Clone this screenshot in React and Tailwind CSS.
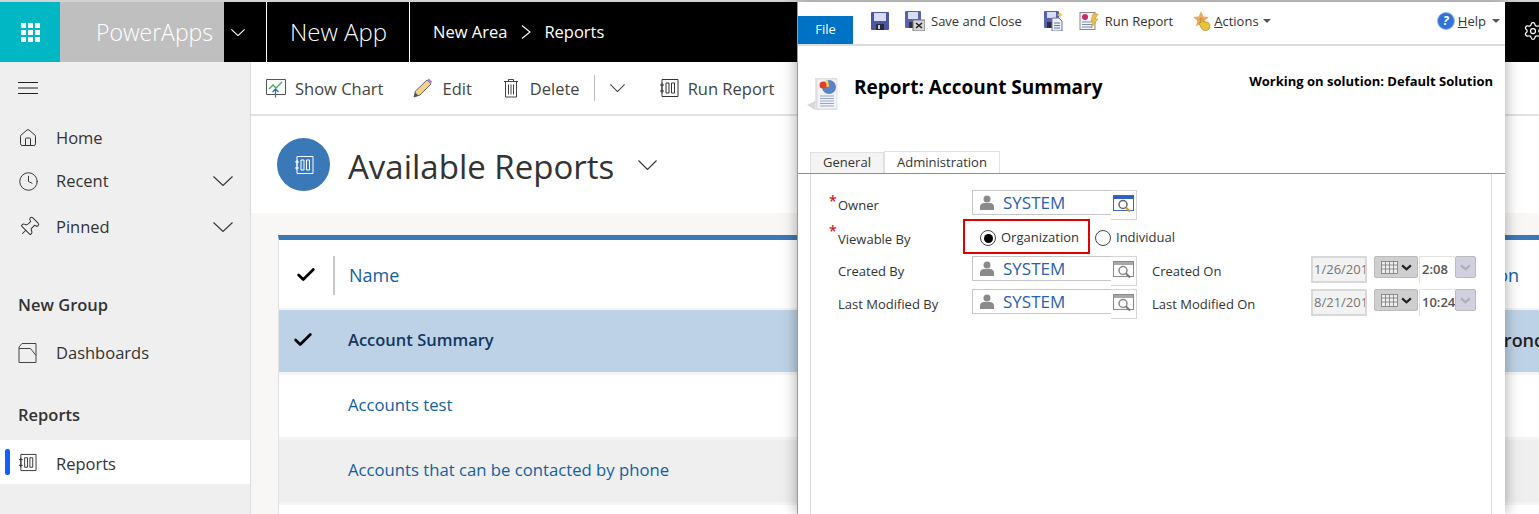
import React from "react";
import { Home, Clock, Pin, Settings, Check } from "lucide-react";

const Chev = ({ className = "", w = 20, h = 10, color = "#333" }) => (
  <svg viewBox="0 0 20 10" width={w} height={h} className={`shrink-0 ${className}`} fill="none" preserveAspectRatio="none">
    <path d="M.5.500L10 9.500 19.500.500" stroke={color} strokeWidth="1.100" vectorEffect="non-scaling-stroke" />
  </svg>
);

const ReportIcon = ({ className = "", color = "#333" }) => (
  <svg viewBox="0 0 20 20" className={className} fill="none" stroke={color} strokeWidth="1">
    <path d="M3 1.500h16v17H3z" />
    <path d="M7 5h3v10H7zM12.500 5h3v10h-3z" />
    <path d="M1 7h4M1 13h4M3 5v10" />
  </svg>
);

const ChartIcon = () => (
  <svg viewBox="0 0 20 20" className="w-5 h-5 shrink-0" fill="none">
    <path d="M.5 1.500h19v15H.5z" stroke="#555" />
    <path d="M3 11l4-4 3 3 6-6" stroke="#3fae5a" strokeWidth="1.300" />
    <path d="M9.500 19.500v-8M6.500 14l3-3 3 3" stroke="#2a6fb5" strokeWidth="1.300" />
  </svg>
);

const PencilIcon = () => (
  <svg viewBox="0 0 20 20" className="w-5 h-5 shrink-0">
    <path d="M1 19l1.500-6L14 2l4 4L7 17z" fill="#f1d488" stroke="#666" strokeWidth="1" />
    <path d="M14 2l2-1.500 3 3L18 6z" fill="#a98ad0" />
    <path d="M1 19l1.200-4.500 3.300 3z" fill="#555" />
  </svg>
);

const TrashIcon = () => (
  <svg viewBox="0 0 16 20" className="w-4 h-5 shrink-0" fill="none" stroke="#444">
    <path d="M1 3.500h14M5.500 3.500v-2h5v2M2.500 3.500v15.500h11V3.500M5.500 6.500v10M8 6.500v10M10.500 6.500v10" />
  </svg>
);

const DashIcon = () => (
  <svg viewBox="0 0 19 20" className="w-[19px] h-[20px] shrink-0" fill="none" stroke="#444">
    <path d="M1 19.500h17V.5H4L1 4zM1 5.500h11.500l5.500 7" />
  </svg>
);

const SaveIcon = ({ className = "" }) => (
  <svg viewBox="0 0 18 18" className={className}>
    <rect x="0" y="0" width="18" height="18" rx="1" fill="#4d55a8" />
    <rect x="3" y="1" width="12" height="8" fill="#d8dcf4" />
    <rect x="5" y="12" width="8" height="6" fill="#2b2b38" />
    <rect x="7" y="13" width="2" height="4" fill="#c5c8d8" />
  </svg>
);

const SaveClose = () => (
  <svg viewBox="0 0 20 20" className="w-5 h-5 shrink-0">
    <rect x="0" y="0" width="16" height="17" rx="1" fill="#5a62ad" />
    <rect x="3" y="1" width="10" height="7" fill="#d8dcf4" />
    <rect x="4" y="11" width="8" height="6" fill="#30303c" />
    <rect x="8" y="9" width="12" height="11" fill="#d5d5d5" stroke="#777" />
    <path d="M11 12l6 5M17 12l-6 5" stroke="#222" strokeWidth="1.500" />
  </svg>
);

const SaveNew = () => (
  <svg viewBox="0 0 19 20" className="w-[19px] h-5 shrink-0">
    <rect x="0" y="0" width="15" height="17" rx="1" fill="#5a62ad" />
    <rect x="3" y="1" width="9" height="6" fill="#d8dcf4" />
    <rect x="3" y="11" width="7" height="6" fill="#30303c" />
    <path d="M8 7h7l3 3v10H8z" fill="#eef1fb" stroke="#6a74a8" />
    <path d="M10 12h6M10 14.500h6M10 17h6" stroke="#5a72b0" />
    <path d="M16 1l1 2 2 1-2 1-1 2-1-2-2-1 2-1z" fill="#f4c64a" />
  </svg>
);

const RunIcon = () => (
  <svg viewBox="0 0 20 20" className="w-5 h-5 shrink-0">
    <rect x="1" y="1.500" width="15" height="17" fill="#f4f4f4" stroke="#888" />
    <circle cx="6" cy="6" r="3" fill="#c8286e" />
    <path d="M3 11h10M3 13.500h10M3 16h10" stroke="#7a8ab0" />
    <path d="M14 3h5l-3 5h3l-7 9 2-7h-2z" fill="#e8c24a" stroke="#b98f20" strokeWidth=".5" />
  </svg>
);

const ActionsIcon = () => (
  <svg viewBox="0 0 20 20" className="w-5 h-5 shrink-0">
    <path d="M8 0l2.300 5.500 5.700.500-4.300 3.800 1.300 5.700L8 12.500 3 15.500l1.300-5.700L0 6l5.700-.500z" fill="#f0a860" />
    <path d="M7 7.500c1-1 2 0 2 1l1 2 4 .500c2 .500 3 2 3 4 0 3-2 4.500-4 4.500-3 0-4-1-5-3l-2-4c0-1 1-1.500 2-.500z" fill="#e8c23c" stroke="#9c7d1c" strokeWidth=".6" />
  </svg>
);

const HelpIcon = () => (
  <div className="w-[18px] h-[18px] rounded-full bg-[#2f72d8] border border-[#9db9dc] flex items-center justify-center text-white text-[12px] font-bold italic leading-none shrink-0">?</div>
);

const ReportDoc = () => (
  <svg viewBox="0 0 32 38" className="w-8 h-[38px] shrink-0">
    <path d="M0 28l8-4v9z" fill="#d9d9d9" />
    <rect x="8" y="1" width="22" height="32" fill="#e6e6e6" />
    <rect x="10" y="2" width="20" height="30" fill="#f3f4fa" stroke="#c6c6c6" strokeWidth=".5" />
    <circle cx="22" cy="10" r="7" fill="#5d83c4" />
    <path d="M22 10l-7-1a7 7 0 0 1 6-6z" fill="#ffd24c" />
    <circle cx="16" cy="8" r="3.500" fill="#e8392c" />
    <path d="M13 19h14M13 21.500h14M13 24h14M13 26.500h14M13 29h14" stroke="#95a6c8" />
  </svg>
);

const PersonIcon = () => (
  <svg viewBox="0 0 14 16" className="w-[14px] h-4 shrink-0" fill="#8a8a8a">
    <circle cx="7" cy="4" r="3.500" />
    <path d="M0 15v-3.500c0-2 2-3.500 4-3.500h6c2 0 4 1.500 4 3.500V15z" />
  </svg>
);

const LookupIcon = ({ active }) => (
  <svg viewBox="0 0 21 18" className="w-[21px] h-[18px]" fill="none">
    <rect x=".5" y=".5" width="20" height="15" fill="#fff" stroke={active ? "#3c68b0" : "#8a8a8a"} />
    <rect x="1" y="1" width="19" height="3" fill={active ? "#2f62c0" : "#a8a8a8"} />
    <circle cx="10" cy="9.500" r="4" stroke={active ? "#666" : "#888"} strokeWidth="1.500" />
    <path d="M13 12.500l4 4" stroke={active ? "#d8962c" : "#777"} strokeWidth="2" />
  </svg>
);

const CalIcon = () => (
  <svg viewBox="0 0 17 13" className="w-[17px] h-[13px]" fill="none" stroke="#777" strokeWidth=".8">
    <rect x=".5" y=".5" width="16" height="12" fill="#eee" />
    <path d="M.5 4h16M.5 8h16M4.500.5v12M8.500.5v12M12.500.5v12" />
  </svg>
);

const TinyChev = ({ color }) => (
  <svg viewBox="0 0 12 8" className="w-[11px] h-[7px]" fill="none">
    <path d="M1 1.500l5 4.500 5-4.500" stroke={color} strokeWidth="2.500" />
  </svg>
);

const SysField = ({ active }) => (
  <div className="flex h-[27px] items-start w-[165px]">
    <div className="w-[139px] h-[25px] border border-[#c6c6c6] border-r-0 bg-white flex items-center pl-[7px] gap-[9px]">
      <PersonIcon />
      <span className="text-[#2a5fb0] text-[17px] leading-none">SYSTEM</span>
    </div>
    <div className="w-[26px] h-[30px] border-r border-b border-t border-[#d5d5d5] bg-white flex items-start justify-center pt-[4px]">
      <LookupIcon active={active} />
    </div>
  </div>
);

const DateGroup = ({ d, t }) => (
  <div className="flex items-start gap-[7px]">
    <div className="w-[56px] h-[27px] border-2 border-[#d8d8d8] bg-[#f2f2f2] overflow-hidden flex items-center pl-[1px] text-[13px] text-[#767676] whitespace-nowrap">{d}</div>
    <div className="flex gap-[1px]">
      <div className="w-[44px] h-[22px] border border-[#bbb] rounded-[2px] bg-[#cfcfcf] flex items-center justify-center gap-[3px]">
        <CalIcon />
        <TinyChev color="#222" />
      </div>
      <div className="w-[36px] h-[27px] bg-white border-t border-l border-[#e2e2e2] overflow-hidden flex items-center pl-[2px] text-[13px] font-semibold text-[#555] whitespace-nowrap">{t}</div>
      <div className="w-[21px] h-[22px] -ml-[1px] border border-[#bbb] rounded-[2px] bg-[#d0d0de] flex items-center justify-center">
        <TinyChev color="#aeaeb8" />
      </div>
    </div>
  </div>
);

const Label = ({ req, pt = "", children }) => (
  <div className={`w-[161px] flex text-[13px] text-[#333] pl-[27px] relative whitespace-nowrap ${pt}`}>
    {req && <span className="absolute left-[18px] -top-[2px] text-[#d01818] text-[14px] font-semibold">*</span>}
    {children}
  </div>
);

const Radio = ({ on }) => (
  <div className="w-[16px] h-[16px] rounded-full border border-[#444] bg-white flex items-center justify-center shrink-0">
    {on && <div className="w-[9px] h-[9px] rounded-full bg-black" />}
  </div>
);

const NavItem = ({ icon, label, chevron, active }) => (
  <div className={`relative flex items-center pl-[18px] h-[44px] ${active ? "bg-white" : ""}`}>
    {active && <div className="absolute left-[5px] top-[9px] w-[5px] h-[26px] rounded-[2px] bg-[#0f62fe]" />}
    <div className="w-[38px] flex items-center">{icon}</div>
    <span className={`text-[16.5px] text-[#333] ${active ? "pt-[4px]" : ""}`}>{label}</span>
    {chevron && <Chev className="ml-auto mr-[17px]" />}
  </div>
);

const Cmd = ({ icon, label, className = "" }) => (
  <div className={`flex items-center gap-[9px] text-[16.5px] text-[#444] ${className}`}>
    {icon}
    <span className="pt-[2px]">{label}</span>
  </div>
);

export default function App() {
  return (
    <div className="relative w-[1539px] h-[514px] overflow-hidden bg-white flex flex-col" style={{ fontFamily: '"Open Sans", "Noto Sans", sans-serif' }}>
      <div className="h-[2px] bg-[#d2d2d2] shrink-0" />
      {/* top bar */}
      <div className="h-[60px] bg-black flex items-stretch text-white shrink-0">
        <div className="w-[60px] bg-[#00b7c3] grid place-items-center">
          <div className="grid grid-cols-3 gap-[2px]">
            {[...Array(9)].map((_, i) => <div key={i} className="w-[5px] h-[5px] bg-white" />)}
          </div>
        </div>
        <div className="w-[164px] bg-[#bfbfbf] flex items-center justify-end pr-[11px] text-[23px] font-light">PowerApps</div>
        <div className="w-[43px] flex items-center pl-[7px] border-r border-white">
          <Chev w={14} h={7} color="#fff" />
        </div>
        <div className="w-[143px] flex items-center pl-[23px] border-r border-white text-[24px] font-light">New App</div>
        <div className="flex items-center pl-[23px] text-[16.5px]">
          <span>New Area</span>
          <svg viewBox="0 0 10 14" className="w-[10px] h-[14px] ml-[14px] mr-[13px]" fill="none">
            <path d="M1 .5l8 6.500-8 6.500" stroke="#fff" strokeWidth="1.100" />
          </svg>
          <span>Reports</span>
        </div>
        <Settings className="absolute left-[1523px] top-[21px] w-[20px] h-[20px]" strokeWidth={1.500} />
      </div>
      <div className="flex flex-1 min-h-0">
        {/* sidebar */}
        <aside className="w-[251px] shrink-0 bg-[#efefef] border-r border-[#dcdcdc] flex flex-col">
          <div className="h-[54px] flex items-center pl-[18px] pb-[2px]">
            <svg viewBox="0 0 20 12" className="w-[20px] h-[12px]" fill="none">
              <path d="M0 .5h20M0 6h20M0 11.500h20" stroke="#222" strokeWidth="1" />
            </svg>
          </div>
          <div>
            <NavItem icon={<Home className="w-[20px] h-[20px] text-[#333]" strokeWidth={1.200} />} label="Home" />
            <div className="-mt-[1px]"><NavItem icon={<Clock className="w-[21px] h-[21px] text-[#333]" strokeWidth={1.100} />} label="Recent" chevron /></div>
            <div className="mt-[2px]"><NavItem icon={<Pin className="w-[22px] h-[22px] rotate-45 text-[#333]" strokeWidth={1.100} />} label="Pinned" chevron /></div>
          </div>
          <div className="pl-[18px] mt-[44px] text-[16.5px] font-semibold text-[#333] leading-[24px]">New Group</div>
          <div className="mt-[14px]"><NavItem icon={<DashIcon />} label="Dashboards" /></div>
          <div className="pl-[18px] mt-[28px] text-[16.5px] font-semibold text-[#333] leading-[24px]">Reports</div>
          <div className="mt-[13px]"><NavItem active icon={<ReportIcon className="w-[19px] h-[19px]" />} label="Reports" /></div>
        </aside>
        {/* main */}
        <main className="flex-1 flex flex-col min-w-0 bg-[#f8f7f6]">
          <div className="h-[54px] shrink-0 bg-white border-b-2 border-[#e2e2e2] flex items-center pl-[15px]">
            <Cmd icon={<ChartIcon />} label="Show Chart" />
            <Cmd className="ml-[30px]" icon={<PencilIcon />} label="Edit" />
            <Cmd className="ml-[31px] gap-[11px]" icon={<TrashIcon />} label="Delete" />
            <div className="w-px h-[26px] bg-[#bbb] ml-[14px]" />
            <Chev className="ml-[15px]" w={15} h={8} color="#444" />
            <div className="ml-[34px]"><Cmd icon={<ReportIcon className="w-[20px] h-[20px]" />} label="Run Report" /></div>
          </div>
          <div className="h-[97px] shrink-0 bg-white flex items-center pl-[26px]">
            <div className="w-[53px] h-[53px] rounded-full bg-[#3b78b8] grid place-items-center">
              <ReportIcon className="w-[20px] h-[20px]" color="#fff" />
            </div>
            <span className="ml-[18px] pt-[4px] text-[33px] text-[#333]">Available Reports</span>
            <Chev className="ml-[24px]" w={19} h={10} />
          </div>
          <div className="ml-[27px] mt-[22px] flex-1 border-l border-[#e2e2e2] border-t-[5px] border-t-[#3b78b8] bg-white flex flex-col">
            <div className="h-[68px] flex items-center shrink-0 pt-[2px]">
              <div className="w-[56px] h-[39px] border-r-2 border-[#c8c8c8] flex items-center justify-center">
                <Check className="w-[22px] h-[22px] text-black" strokeWidth={3} />
              </div>
              <span className="ml-[14px] text-[18px] text-[#14609f]">Name</span>
              <span className="ml-auto mr-[20px] text-[18px] text-[#14609f]">on</span>
            </div>
            <div className="h-[2px] bg-[#f4f4f4] shrink-0" />
            <div className="h-[62px] bg-[#bed2e7] flex items-center shrink-0 overflow-hidden pb-[2px]">
              <div className="w-[48px] flex justify-center"><Check className="w-[22px] h-[22px] text-black" strokeWidth={3} /></div>
              <span className="ml-[21px] text-[16.5px] font-semibold text-[#14365f]">Account Summary</span>
              <span className="ml-auto -mr-[4px] text-[18px] font-semibold text-[#222]">ronc</span>
            </div>
            <div className="h-[3px] bg-[#f4f4f4] shrink-0" />
            <div className="h-[62px] flex items-center pl-[69px] pb-[3px] text-[16.7px] text-[#14609f] shrink-0">Accounts test</div>
            <div className="h-[3px] bg-[#f4f4f4] shrink-0" />
            <div className="h-[62px] bg-[#efefef] flex items-center pl-[69px] pb-[3px] text-[16.7px] text-[#14609f] shrink-0">Accounts that can be contacted by phone</div>
            <div className="h-[3px] bg-[#f4f4f4] shrink-0" />
          </div>
        </main>
      </div>

      {/* dialog window over the page */}
      <div className="absolute left-[797px] top-[2px] bottom-0 w-[708px] bg-white border-l border-[#9a9a9a] shadow-[0_0_14px_rgba(0,0,0,0.35)] flex flex-col text-[#333]">
        <div className="h-[44px] shrink-0 border-b-2 border-[#dcdcdc] flex items-end relative text-[13px]">
          <div className="w-[55px] h-[28px] bg-[#0072c6] text-white flex items-center justify-center">File</div>
          <div className="absolute inset-x-0 top-[8px] pl-[73px] flex items-center h-[22px]">
            <SaveIcon className="w-[18px] h-[18px] shrink-0" />
            <div className="ml-[16px]"><SaveClose /></div>
            <span className="ml-[6px] pt-[2px]">Save and Close</span>
            <div className="ml-[22px]"><SaveNew /></div>
            <div className="ml-[16px]"><RunIcon /></div>
            <span className="ml-[6px] pt-[2px]">Run Report</span>
            <div className="ml-[20px]"><ActionsIcon /></div>
            <span className="ml-[1px] pt-[2px]"><u>A</u>ctions</span>
            <span className="ml-[4px] w-0 h-0 border-x-[4px] border-x-transparent border-t-[4px] border-t-[#555]" />
            <div className="ml-auto"><HelpIcon /></div>
            <span className="ml-[3px] pt-[2px]"><u>H</u>elp</span>
            <span className="ml-[6px] mr-[5px] w-0 h-0 border-x-[4px] border-x-transparent border-t-[4px] border-t-[#555]" />
          </div>
        </div>
        <div className="h-[102px] shrink-0 flex items-start pl-[9px] pt-[28px]">
          <div className="w-[47px] pt-[3px]"><ReportDoc /></div>
          <div className="text-[19px] font-bold text-black leading-[26px]">Report: Account Summary</div>
          <div className="ml-auto mr-[12px] text-[13px] font-bold text-black leading-[18px] -mt-[2px]">Working on solution: Default Solution</div>
        </div>
        <div className="flex pl-[12px] h-[26px] shrink-0 border-b border-[#8f8f99] text-[13px] items-end">
          <div className="h-[21px] w-[74px] border border-[#e0e0e0] border-b-0 bg-[#f4f4f4] flex items-center justify-center">General</div>
          <div className="h-[22px] w-[116px] border border-[#e0e0e0] border-b-0 bg-white flex items-center justify-center">Administration</div>
        </div>
        <div className="ml-[12px] mr-[13px] flex-1 border-x border-[#dcdcdc] pt-[16px] text-[13px]">
          <div className="flex items-center h-[27px]">
            <Label req pt="pt-[4px]">Owner</Label>
            <SysField active />
          </div>
          <div className="flex items-center h-[36px] mt-[1px]">
            <Label req pt="pt-[8px]">Viewable By</Label>
            <div className="w-[127px] h-[35px] -ml-[9px] border-2 border-[#e00000] flex items-center pl-[15px] pt-[4px] gap-[5px]">
              <Radio on />
              <span>Organization</span>
            </div>
            <div className="ml-[5px] flex items-center gap-[5px] pt-[4px]">
              <Radio />
              <span>Individual</span>
            </div>
          </div>
          <div className="flex items-center h-[27px] mt-[2px]">
            <Label pt="pt-[4px]">Created By</Label>
            <SysField />
            <div className="w-[174px] pl-[15px] pt-[4px]">Created On</div>
            <DateGroup d="1/26/2017" t="2:08" />
          </div>
          <div className="flex items-center h-[27px] mt-[6px]">
            <Label pt="pt-[4px]">Last Modified By</Label>
            <SysField />
            <div className="w-[174px] pl-[15px] pt-[4px]">Last Modified On</div>
            <DateGroup d="8/21/2017" t="10:24" />
          </div>
        </div>
      </div>
    </div>
  );
}
